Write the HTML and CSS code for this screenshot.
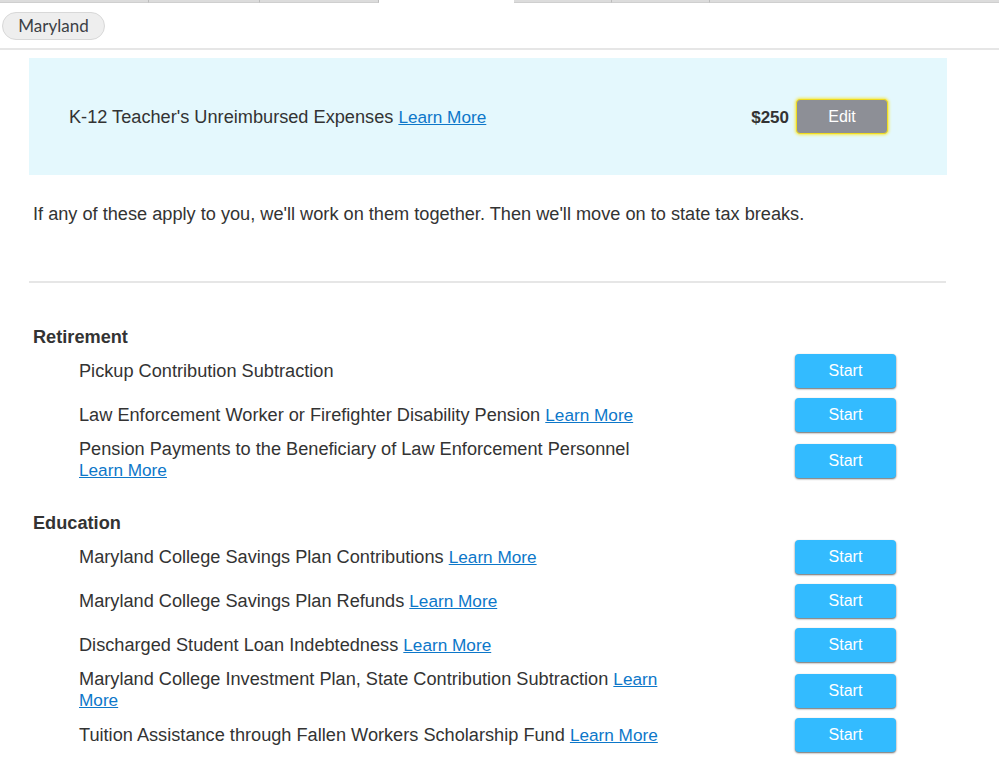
FILE: index.html
```html
<!DOCTYPE html>
<html lang="en">
<head>
<meta charset="utf-8">
<title>Maryland</title>
<link rel="stylesheet" href="styles.css">
</head>
<body>
<div class="tabs">
  <div class="tab t1"></div><div class="tab t2"></div><div class="tab t3"></div>
  <div class="tab active"></div>
  <div class="tab t5"></div><div class="tab t6"></div><div class="tab t7"></div>
</div>
<div class="chipbar"><span class="chip">Maryland</span></div>
<main class="content">
  <section class="banner">
    <div class="banner-text">K-12 Teacher's Unreimbursed Expenses <a href="#">Learn More</a></div>
    <b class="amount">$250</b>
    <button class="btn edit">Edit</button>
  </section>
  <p class="intro">If any of these apply to you, we'll work on them together. Then we'll move on to state tax breaks.</p>
  <hr class="rule">
  <h2 class="group first">Retirement</h2>
  <div class="row"><div class="label">Pickup Contribution Subtraction</div><button class="btn start">Start</button></div>
  <div class="row"><div class="label">Law Enforcement Worker or Firefighter Disability Pension <a href="#">Learn More</a></div><button class="btn start">Start</button></div>
  <div class="row wrap"><div class="label">Pension Payments to the Beneficiary of Law Enforcement Personnel <a href="#">Learn More</a></div><button class="btn start">Start</button></div>
  <h2 class="group">Education</h2>
  <div class="row"><div class="label">Maryland College Savings Plan Contributions <a href="#">Learn More</a></div><button class="btn start">Start</button></div>
  <div class="row"><div class="label">Maryland College Savings Plan Refunds <a href="#">Learn More</a></div><button class="btn start">Start</button></div>
  <div class="row"><div class="label">Discharged Student Loan Indebtedness <a href="#">Learn More</a></div><button class="btn start">Start</button></div>
  <div class="row wrap"><div class="label">Maryland College Investment Plan, State Contribution Subtraction <a href="#">Learn More</a></div><button class="btn start">Start</button></div>
  <div class="row"><div class="label">Tuition Assistance through Fallen Workers Scholarship Fund <a href="#">Learn More</a></div><button class="btn start">Start</button></div>
</main>
</body>
</html>
```
FILE: styles.css
```css
* { box-sizing: border-box; }
html, body { margin: 0; padding: 0; background: #fff; }
body {
  font-family: "Liberation Sans", Arial, sans-serif;
  font-size: 18.18px;
  line-height: 21px;
  color: #333;
  overflow: hidden;
  height: 765px;
}
a { color: #0d77c9; text-decoration: underline; font-size: 17.2px; }

.tabs { display: flex; height: 3px; }
.tab { background: #dcdcdc; border-right: 1px solid #bdbdbd; border-bottom: 1px solid #cfcfcf; }
.t1 { width: 149px; }
.t2 { width: 111px; }
.t3 { width: 119px; }
.active { width: 135px; background: #fff; border: 0; }
.t5 { width: 98px; }
.t6 { width: 98px; }
.t7 { flex: 1; border-right: 0; }

.chipbar {
  height: 47px;
  padding: 9px 0 0 2px;
  border-bottom: 2px solid #e6e6e6;
}
.chip {
  display: inline-block;
  width: 103px;
  height: 28px;
  border: 1px solid #d8d8d8;
  border-radius: 14px;
  background: #eeeeee;
  text-align: center;
  font-family: "Lato", "Liberation Sans", sans-serif;
  font-size: 17px;
  line-height: 25px;
  color: #3c3f45;
}

.content { width: 947px; padding: 8px 0 0 29px; }

.banner {
  display: flex;
  align-items: center;
  width: 918px;
  height: 117px;
  padding: 0 59px 0 40px;
  background: #e4f8fd;
}
.banner-text { flex: 1; margin-top: 2px; }
.amount { margin: 0 7px 0 0; font-size: 17px; padding-top: 1px; }

.btn {
  font-family: "Liberation Sans", Arial, sans-serif;
  font-size: 16px;
  color: #fff;
  border: 0;
  border-radius: 4px;
  padding: 0;
}
.edit {
  width: 92px;
  height: 35px;
  background: #8d8f96;
  border: 1px solid #f0dc1e;
  box-shadow: 0 0 3px 1px #f5e84a;
}
.start {
  flex: none;
  width: 101px;
  height: 34px;
  margin-right: 51px;
  background: #33bbff;
  box-shadow: 0 1px 2px 0 #666;
}

.intro { margin: 29px 0 0 4px; }
.rule { margin: 56px 0 0 0; width: 917px; height: 2px; border: 0; background: #e6e6e6; }

.group { margin: 32px 0 3px 4px; font-size: 18.18px; line-height: 21px; font-weight: 700; }
.group.first { margin-top: 44px; }

.row {
  display: flex;
  align-items: center;
  justify-content: space-between;
  min-height: 40px;
  margin-bottom: 4px;
  padding-left: 50px;
}
.label { width: 580px; }
.wrap .start { margin-top: 2px; }
```
